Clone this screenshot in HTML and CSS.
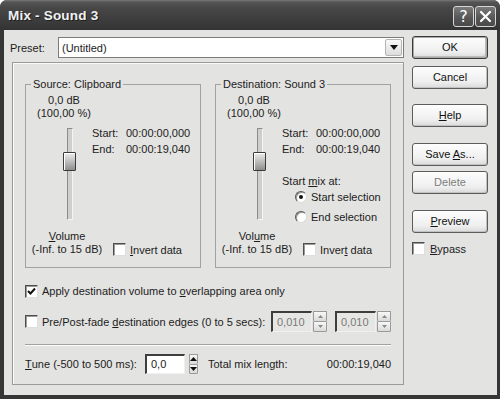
FILE: index.html
```html
<!DOCTYPE html>
<html>
<head>
<meta charset="utf-8">
<link rel="stylesheet" href="styles.css">
</head>
<body>
<div class="window">
  <div class="titlebar">
    <span class="title">Mix - Sound 3</span>
    <div class="tb-buttons">
      <span class="tb-btn">?</span>
      <span class="tb-btn"><svg width="13" height="13" viewBox="0 0 13 13"><path d="M2 2 L11 11 M11 2 L2 11" stroke="#fff" stroke-width="2.2" stroke-linecap="round"/></svg></span>
    </div>
  </div>
  <div class="client">
    <div class="leftcol">
      <div class="preset-row">
        <span class="preset-label">Preset:</span>
        <div class="combo">
          <span class="combo-text">(Untitled)</span>
          <span class="combo-btn"><svg width="8" height="5" viewBox="0 0 8 5"><path d="M0 0 H8 L4 5 Z" fill="#111"/></svg></span>
        </div>
      </div>
      <div class="panel">
        <div class="groups">
          <fieldset class="group">
            <legend>Source: Clipboard</legend>
            <div class="db">0,0 dB<br>(100,00 %)</div>
            <div class="mid">
              <div class="slider"><div class="track"></div><div class="thumb"></div></div>
              <div class="info">
                <div class="times"><span>Start:</span><span>00:00:00,000</span><span>End:</span><span>00:00:19,040</span></div>
              </div>
            </div>
            <div class="bottom">
              <div class="vol"><u>V</u>olume<br>(-Inf. to 15 dB)</div>
              <div class="check-row inv"><span class="cbox"></span><span><u>I</u>nvert data</span></div>
            </div>
          </fieldset>
          <fieldset class="group">
            <legend>Destination: Sound 3</legend>
            <div class="db">0,0 dB<br>(100,00 %)</div>
            <div class="mid">
              <div class="slider"><div class="track"></div><div class="thumb"></div></div>
              <div class="info">
                <div class="times"><span>Start:</span><span>00:00:00,000</span><span>End:</span><span>00:00:19,040</span></div>
                <div class="mixat">Start <u>m</u>ix at:</div>
                <div class="radio-row first"><span class="radio on"></span><span>Start selection</span></div>
                <div class="radio-row"><span class="radio"></span><span>End selection</span></div>
              </div>
            </div>
            <div class="bottom">
              <div class="vol">Vol<u>u</u>me<br>(-Inf. to 15 dB)</div>
              <div class="check-row inv"><span class="cbox"></span><span>Inver<u>t</u> data</span></div>
            </div>
          </fieldset>
        </div>
        <div class="check-row apply"><span class="cbox checked"><svg width="9" height="9" viewBox="0 0 9 9"><path d="M1 4 L3.5 6.5 L8 1.5" fill="none" stroke="#111" stroke-width="2"/></svg></span><span>Apply destination volume to <u>o</u>verlapping area only</span></div>
        <div class="check-row fade">
          <span class="cbox"></span><span>Pre/Post-fade <u>d</u>estination edges (0 to 5 secs):</span>
          <div class="spins">
            <span class="edit disabled">0,010</span>
            <span class="spin disabled"><span class="sp up"><svg width="5" height="3" viewBox="0 0 5 3"><path d="M0 3 L2.5 0 L5 3Z" fill="#888"/></svg></span><span class="sp"><svg width="5" height="3" viewBox="0 0 5 3"><path d="M0 0 H5 L2.5 3Z" fill="#888"/></svg></span></span>
            <span class="edit disabled second">0,010</span>
            <span class="spin disabled"><span class="sp up"><svg width="5" height="3" viewBox="0 0 5 3"><path d="M0 3 L2.5 0 L5 3Z" fill="#888"/></svg></span><span class="sp"><svg width="5" height="3" viewBox="0 0 5 3"><path d="M0 0 H5 L2.5 3Z" fill="#888"/></svg></span></span>
          </div>
        </div>
        <div class="separator"></div>
        <div class="tune-row">
          <span class="tune-label"><u>T</u>une (-500 to 500 ms):</span>
          <span class="edit">0,0</span>
          <span class="spin"><span class="sp up"><svg width="7" height="4" viewBox="0 0 7 4"><path d="M0 4 L3.5 0 L7 4Z" fill="#111"/></svg></span><span class="sp"><svg width="7" height="4" viewBox="0 0 7 4"><path d="M0 0 H7 L3.5 4Z" fill="#111"/></svg></span></span>
          <span class="total-label">Total mix length:</span>
          <span class="total-val">00:00:19,040</span>
        </div>
      </div>
    </div>
    <div class="rightcol">
      <div class="btn default b-ok">OK</div>
      <div class="btn b-cancel">Cancel</div>
      <div class="btn b-help"><u>H</u>elp</div>
      <div class="btn b-save">Save <u>A</u>s...</div>
      <div class="btn b-delete disabled">Delete</div>
      <div class="btn b-preview"><u>P</u>review</div>
      <div class="check-row bypass"><span class="cbox"></span><span><u>B</u>ypass</span></div>
    </div>
  </div>
</div>
</body>
</html>
```
FILE: styles.css
```css
* { box-sizing: border-box; }
html, body { margin: 0; padding: 0; }
body {
  width: 500px; height: 399px; overflow: hidden;
  font-family: "Liberation Sans", Arial, sans-serif;
  font-size: 11px; color: #1c1c1c; background: #fff;
}
u { text-decoration: underline; text-underline-offset: 1px; }

.window {
  width: 500px; height: 399px;
  background: #363636;
  border-radius: 7px 7px 0 0;
  display: flex; flex-direction: column;
}
.titlebar {
  height: 30px; flex: none;
  display: flex; align-items: center; justify-content: space-between;
  padding: 0 4px 0 8px;
  background: linear-gradient(#7a7a7a 0, #555 2px, #474747 8px, #3d3d3d 20px, #333 30px);
  border-radius: 7px 7px 0 0;
}
.title {
  font-size: 13.5px; font-weight: bold; color: #f2f2f2;
  text-shadow: 1px 1px 0 #1e1e1e; letter-spacing: 0.2px;
  margin-top: 1px;
}
.tb-buttons { display: flex; gap: 1px; margin-top: 2px; }
.tb-btn {
  width: 21px; height: 21px;
  border: 1px solid #d6d6d6; border-radius: 3px;
  background: linear-gradient(#7a7a7a, #555 60%, #4a4a4a);
  color: #fff; font-size: 16px;
  display: flex; align-items: center; justify-content: center;
  font-family: "DejaVu Sans", sans-serif;
}

.client {
  flex: 1;
  margin: 0 3px 4px 4px;
  background: #e3e3e1;
  display: flex;
}
.leftcol { width: 400px; display: flex; flex-direction: column; }

.preset-row { display: flex; align-items: center; margin-top: 7px; padding-left: 6px; height: 21px; }
.preset-label { width: 48px; }
.combo {
  width: 346px; height: 21px;
  border: 1px solid #7c7c7c; background: #fff;
  display: flex; align-items: center; justify-content: space-between;
}
.combo-text { padding-left: 3px; }
.combo-btn {
  width: 17px; height: 17px; margin-right: 1px;
  border: 1px solid #b4b4b4; border-radius: 2px;
  background: linear-gradient(#fafafa, #dcdcdc);
  display: flex; align-items: center; justify-content: center;
}

.panel {
  margin: 4px 0 0 8px;
  width: 392px; height: 323px;
  border: 1px solid #9a9a9a;
  box-shadow: inset 1px 1px 0 #fafafa;
  padding: 14px 12px 10px 12px;
  display: flex; flex-direction: column;
}
.groups { display: flex; gap: 14px; }
.group {
  margin: 0; padding: 0 0 11px 0; min-width: 0;
  width: 176px;
  border: 1px solid #a2a2a2;
}
.group legend {
  padding: 0 2px; margin-left: 5px;
  line-height: 14px;
}
.db {
  margin: 3px 0 0 2px; width: 72px;
  text-align: center; line-height: 13px; white-space: nowrap;
}
.mid { display: flex; height: 110px; }
.slider { position: relative; width: 19px; margin-left: 34px; height: 110px; }
.track {
  width: 6px; height: 92px; margin: 8px auto 0;
  border: 1px solid; border-color: #8c8c8c #f4f4f4 #f4f4f4 #8c8c8c;
  background: #cfcfcf;
  border-radius: 1px;
}
.thumb {
  position: absolute; top: 32px; left: 3px;
  width: 13px; height: 19px;
  border: 1px solid #3a3a3a; border-radius: 1px;
  background: linear-gradient(#ededed, #b4b4b4 60%, #8e8e8e);
  box-shadow: inset 1px 1px 0 #fff;
}
.info { margin-left: 13px; padding-top: 5px; }
.times { display: grid; grid-template-columns: 34px auto; line-height: 16px; white-space: nowrap; }
.mixat { margin-top: 18px; line-height: 13px; }
.radio-row { display: flex; align-items: center; height: 18px; margin-left: 13px; gap: 4px; white-space: nowrap; }
.radio-row + .radio-row { margin-top: 2px; }
.radio {
  width: 12px; height: 12px; border-radius: 50%;
  border: 1px solid; border-color: #555 #ddd #ddd #555;
  background: #fff;
  box-shadow: inset 1px 1px 0 #999;
  display: flex; align-items: center; justify-content: center;
}
.radio.on::after { content: ""; width: 4px; height: 4px; border-radius: 50%; background: #111; }

.bottom { display: flex; align-items: flex-end; }
.vol { margin-left: 4px; width: 74px; text-align: center; line-height: 13px; white-space: nowrap; }
.check-row { display: flex; align-items: center; gap: 4px; white-space: nowrap; }
.inv { margin-left: 9px; height: 13px; }
.cbox {
  width: 13px; height: 13px; flex: none;
  border: 1px solid; border-color: #4e4e4e #dedede #dedede #4e4e4e;
  background: #fff;
  box-shadow: inset 1px 1px 0 #9a9a9a;
  display: flex; align-items: center; justify-content: center;
}
.apply { margin-top: 13px; height: 20px; }
.fade { margin-top: 10px; height: 21px; }
.spins { margin-left: auto; display: flex; align-items: stretch; height: 21px; }
.edit {
  width: 41px; height: 21px;
  border: 1px solid; border-width: 2px 1px 1px 2px;
  border-color: #3e3e3e #f0f0f0 #f0f0f0 #3e3e3e;
  background: #fff;
  padding-left: 4px; line-height: 18px;
}
.edit.disabled { background: #e6e6e4; color: #7a7a7a; }
.edit.second { margin-left: 8px; }
.spin { width: 14px; display: flex; flex-direction: column; margin-left: 1px; }
.sp {
  flex: 1;
  border: 1px solid #9a9a9a; border-radius: 1px;
  background: linear-gradient(#f8f8f8, #dadada);
  display: flex; align-items: center; justify-content: center;
}
.sp.up { border-bottom: none; }
.separator {
  margin-top: 12px; height: 2px;
  border-top: 1px solid #a2a2a2; border-bottom: 1px solid #fbfbfb;
}
.tune-row { margin-top: 8px; height: 20px; display: flex; align-items: stretch; white-space: nowrap; }
.tune-row > span { display: flex; align-items: center; }
.tune-label { width: 120px; }
.tune-row .edit { width: 40px; height: 20px; line-height: 17px; display: block; }
.tune-row .spin { display: flex; margin-left: 2px; width: 13px; }
.total-label { margin-left: 8px; }
.total-val { margin-left: auto; }

.rightcol { margin-left: 8px; width: 76px; display: flex; flex-direction: column; padding-top: 6px; }
.btn {
  width: 76px; height: 23px; flex: none;
  border: 1px solid #5c5c5c; border-radius: 3px;
  background: linear-gradient(#fdfdfd, #efefef 70%, #dadada);
  box-shadow: inset -1px -1px 0 #c2c2c2;
  text-align: center; line-height: 21px; color: #111;
}
.btn.default { border-color: #3a3a3a; box-shadow: inset 0 0 0 1px #a8a8a8, inset -2px -2px 0 #bcbcbc; }
.btn.disabled { color: #7c7c7c; }
.b-cancel { margin-top: 7px; }
.b-help { margin-top: 15px; }
.b-save { margin-top: 16px; }
.b-delete { margin-top: 5px; }
.b-preview { margin-top: 16px; }
.bypass { margin-top: 9px; height: 13px; gap: 5px; }
```
